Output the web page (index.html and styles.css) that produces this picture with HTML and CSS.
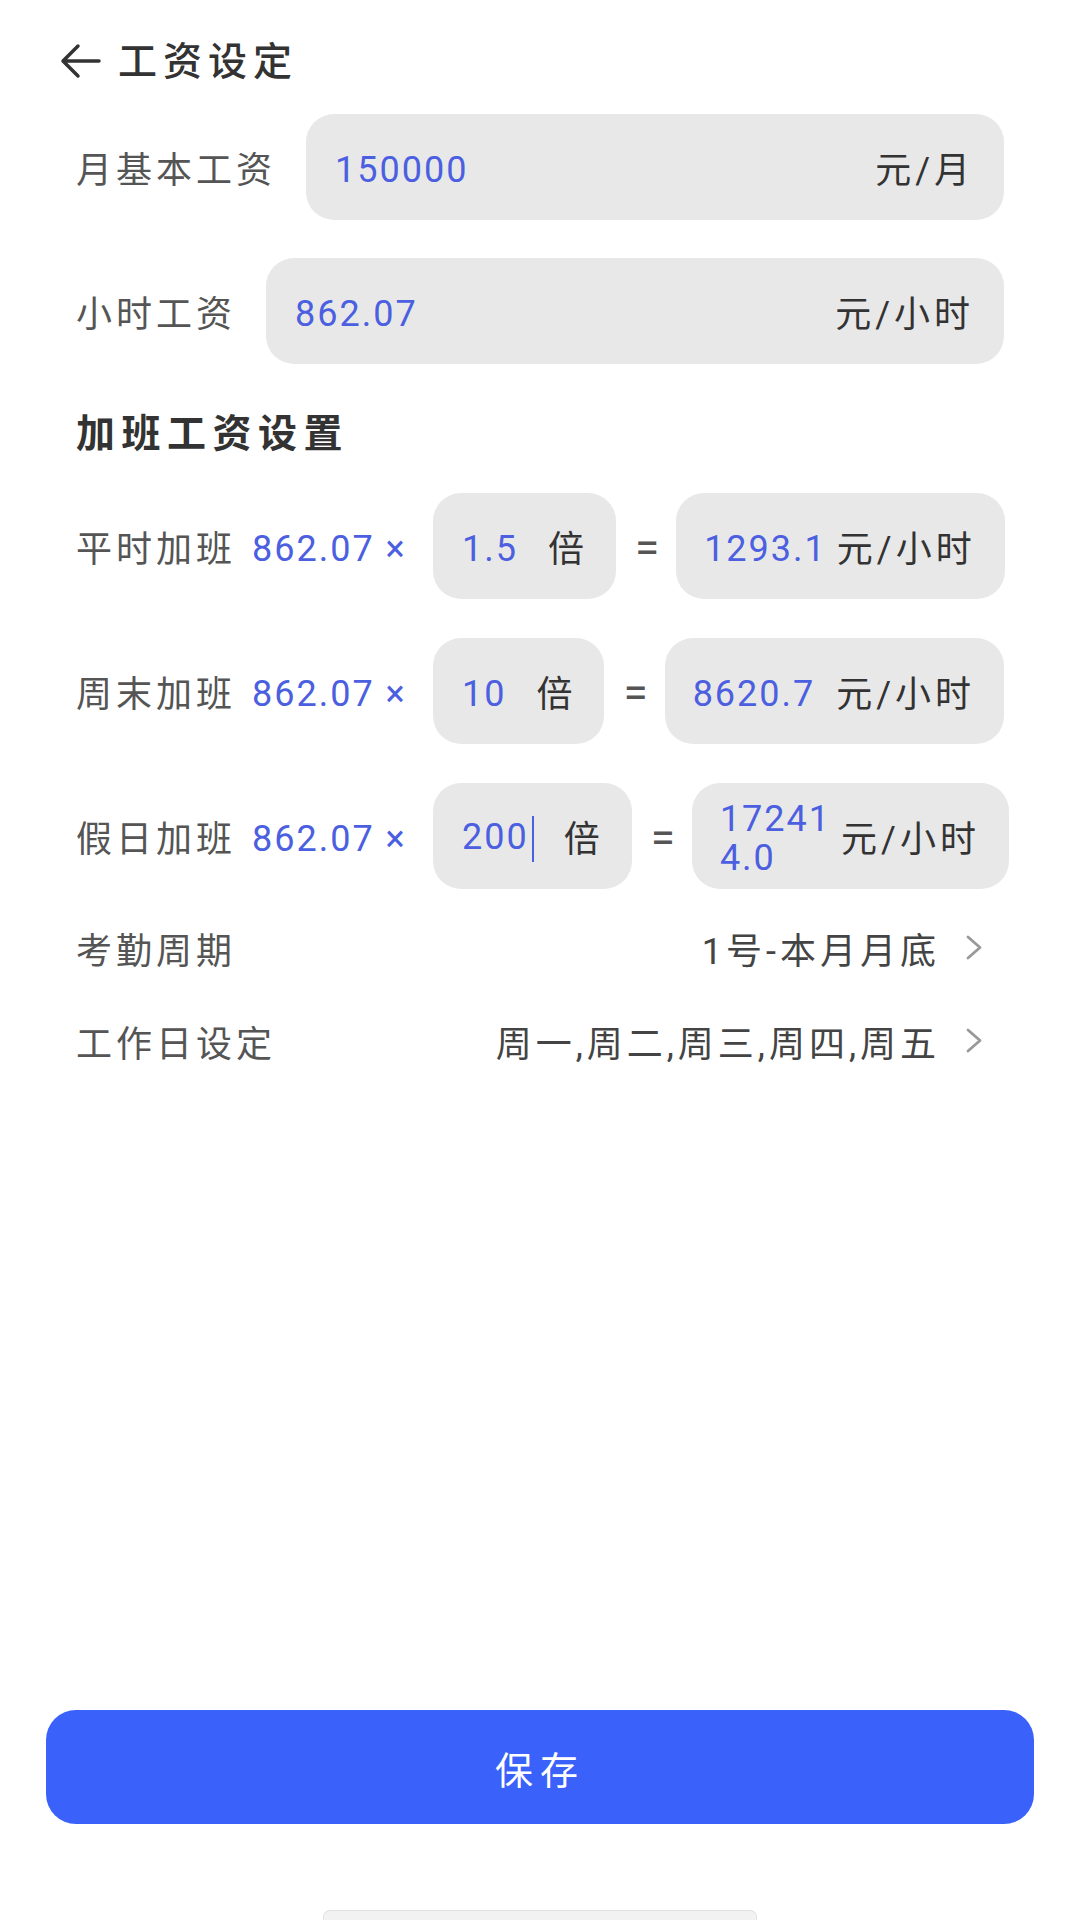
FILE: index.html
```html
<!DOCTYPE html>
<html lang="zh-CN">
<head>
    <meta charset="UTF-8">
    <meta name="viewport" content="width=device-width, initial-scale=1.0">
    <title>工资设定</title>
    <link rel="stylesheet" href="styles.css">
</head>
<body>

<div class="page">
    <header class="topbar">
        <svg class="back" width="42" height="36" viewBox="0 0 42 36">
            <path d="M40 18 H4 M19 3 L4 18 L19 33" fill="none" stroke="#333" stroke-width="3.5" stroke-linecap="round" stroke-linejoin="round"/>
        </svg>
        <h1>工资设定</h1>
    </header>

    <main class="content">
        <div class="fields">
            <div class="field-row">
                <span class="label">月基本工资</span>
                <div class="field">
                    <span class="num">150000</span>
                    <span class="unit">元/月</span>
                </div>
            </div>
            <div class="field-row">
                <span class="label">小时工资</span>
                <div class="field">
                    <span class="num">862.07</span>
                    <span class="unit">元/小时</span>
                </div>
            </div>
        </div>

        <h2 class="section-title">加班工资设置</h2>

        <div class="ot-list">
            <div class="ot-row">
                <span class="label ot-label">平时加班</span>
                <span class="num base">862.07 ×</span>
                <div class="rate">
                    <span class="num">1.5</span>
                    <span class="unit times">倍</span>
                </div>
                <span class="equals">=</span>
                <div class="result">
                    <span class="num">1293.1</span>
                    <span class="unit">元/小时</span>
                </div>
            </div>
            <div class="ot-row">
                <span class="label ot-label">周末加班</span>
                <span class="num base">862.07 ×</span>
                <div class="rate">
                    <span class="num">10</span>
                    <span class="unit times">倍</span>
                </div>
                <span class="equals">=</span>
                <div class="result">
                    <span class="num">8620.7</span>
                    <span class="unit">元/小时</span>
                </div>
            </div>
            <div class="ot-row">
                <span class="label ot-label">假日加班</span>
                <span class="num base">862.07 ×</span>
                <div class="rate">
                    <span class="num">200<span class="caret"></span></span>
                    <span class="unit times">倍</span>
                </div>
                <span class="equals">=</span>
                <div class="result">
                    <span class="num wrapped">17241<br>4.0</span>
                    <span class="unit">元/小时</span>
                </div>
            </div>
        </div>

        <div class="list">
            <div class="list-row">
                <span class="label">考勤周期</span>
                <span class="list-value">1号-本月月底
                    <svg width="18" height="27" viewBox="0 0 18 27"><path d="M3 3 L15 13.5 L3 24" fill="none" stroke="#999" stroke-width="2.8" stroke-linecap="round" stroke-linejoin="round"/></svg>
                </span>
            </div>
            <div class="list-row">
                <span class="label">工作日设定</span>
                <span class="list-value">周一,周二,周三,周四,周五
                    <svg width="18" height="27" viewBox="0 0 18 27"><path d="M3 3 L15 13.5 L3 24" fill="none" stroke="#999" stroke-width="2.8" stroke-linecap="round" stroke-linejoin="round"/></svg>
                </span>
            </div>
        </div>
    </main>

    <footer class="footer">
        <button class="save-btn">保存</button>
        <div class="home-bar"></div>
    </footer>
</div>

</body>
</html>
```

FILE: styles.css
```css
body {
    margin: 0;
    font-family: Roboto, "Noto Sans CJK SC", sans-serif;
    font-size: 36px;
    letter-spacing: 4px;
    color: #333;
    background: #fff;
}
.page {
    display: flex;
    flex-direction: column;
    height: 1920px;
    overflow: hidden;
}
.topbar {
    box-sizing: border-box;
    height: 114px;
    padding: 2px 0 0 59px;
    display: flex;
    align-items: center;
    gap: 17px;
}
.back {
    margin-top: 6px;
}
.topbar h1 {
    margin: 0;
    font-size: 39px;
    font-weight: 500;
    letter-spacing: 6px;
    color: #333;
}
.content {
    display: flex;
    flex-direction: column;
    padding: 0 76px;
}
.label {
    color: #555;
    white-space: nowrap;
}
.num {
    padding-top: 6px;
    color: #4b5fe0;
    letter-spacing: 2px;
    white-space: nowrap;
}
.unit {
    color: #333;
    white-space: nowrap;
}
.fields {
    display: flex;
    flex-direction: column;
    gap: 38px;
}
.field-row {
    display: flex;
    align-items: center;
    gap: 30px;
    height: 106px;
}
.field {
    flex: 1;
    height: 100%;
    box-sizing: border-box;
    display: flex;
    align-items: center;
    justify-content: space-between;
    padding: 0 30px 0 29px;
    background: #e8e8e8;
    border-radius: 28px;
}
.section-title {
    margin: 41px 0 30px;
    height: 58px;
    line-height: 58px;
    font-size: 39px;
    font-weight: 700;
    letter-spacing: 6.5px;
    color: #333;
}
.ot-list {
    display: flex;
    flex-direction: column;
    gap: 39px;
}
.ot-row {
    display: flex;
    align-items: center;
    height: 106px;
}
.ot-label {
    width: 176px;
    flex-shrink: 0;
}
.base {
    width: 181px;
    flex-shrink: 0;
}
.rate {
    height: 100%;
    box-sizing: border-box;
    display: flex;
    align-items: center;
    padding: 0 28px 0 29px;
    background: #e8e8e8;
    border-radius: 28px;
}
.times {
    margin-left: 30px;
}
.caret {
    display: inline-block;
    width: 2px;
    height: 46px;
    margin-left: 3px;
    background: #4b5fe0;
    vertical-align: middle;
}
.equals {
    margin: 0 17px 0 19px;
    padding-top: 4px;
    font-size: 44px;
    color: #555;
    letter-spacing: 0;
}
.result {
    flex: 1;
    height: 100%;
    box-sizing: border-box;
    display: flex;
    align-items: center;
    justify-content: space-between;
    gap: 10px;
    padding: 0 29px 0 28px;
    background: #e8e8e8;
    border-radius: 28px;
}
.wrapped {
    line-height: 39px;
}
.list {
    margin-top: 12px;
}
.list-row {
    height: 93px;
    display: flex;
    align-items: center;
    justify-content: space-between;
    padding-right: 21px;
}
.list-value {
    display: flex;
    align-items: center;
    gap: 25px;
    color: #444;
    white-space: nowrap;
}
.footer {
    margin-top: auto;
    padding: 0 46px;
}
.save-btn {
    display: block;
    width: 100%;
    height: 114px;
    border: none;
    border-radius: 30px;
    background: #3a62fb;
    color: #fff;
    font: inherit;
    font-size: 38px;
    letter-spacing: 7px;
    cursor: pointer;
}
.home-bar {
    box-sizing: border-box;
    width: 434px;
    height: 10px;
    margin: 86px auto 0;
    background: #f2f2f2;
    border: 1px solid #e2e2e2;
    border-bottom: none;
    border-radius: 7px 7px 0 0;
}
```
